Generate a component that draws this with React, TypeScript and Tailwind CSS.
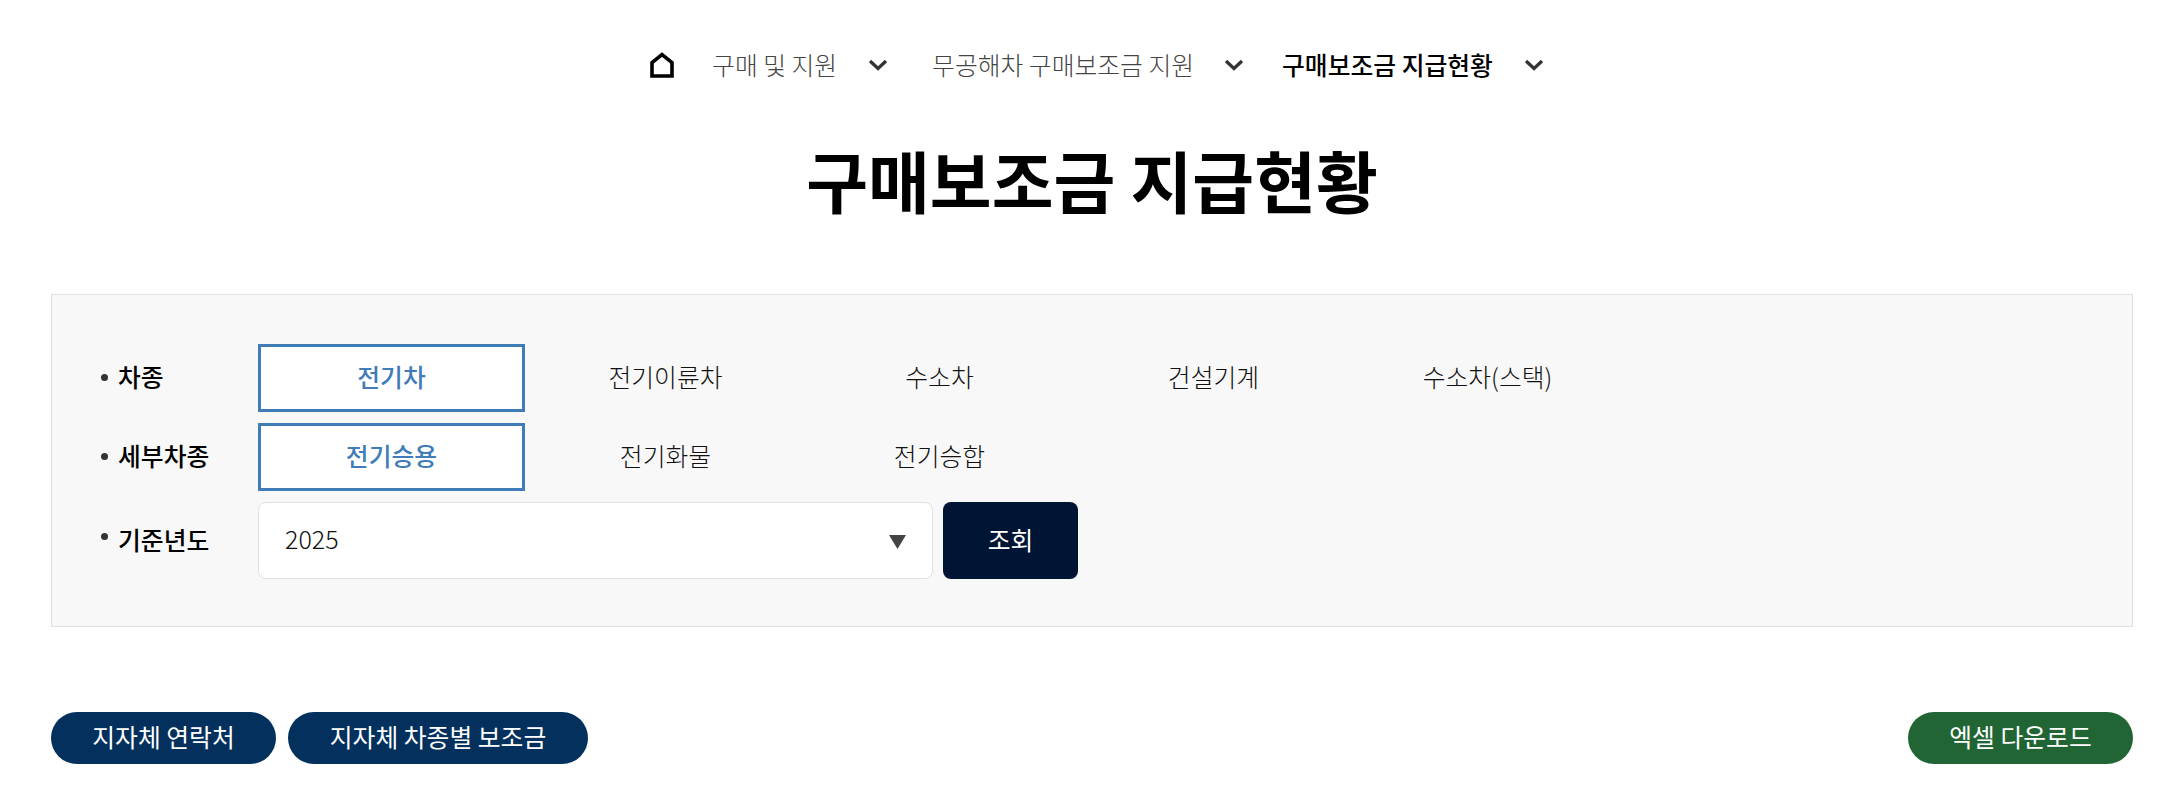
import { useState } from "react";

const crumbs = [
  { label: "구매 및 지원", cls: "ml-[38px] font-light text-[#444]", gap: "ml-[31px]" },
  { label: "무공해차 구매보조금 지원", cls: "ml-[44px] font-light text-[#444]", gap: "ml-[30px]" },
  { label: "구매보조금 지급현황", cls: "ml-[38px] font-medium text-black", gap: "ml-[31px]" },
];

const vehicleTypes = ["전기차", "전기이륜차", "수소차", "건설기계", "수소차(스택)"];
const subTypes = ["전기승용", "전기화물", "전기승합"];

function HomeIcon() {
  return (
    <svg width="24" height="26" viewBox="0 0 24 26" fill="none" stroke="#000" strokeWidth="3.6">
      <path d="M2 24V10.5L12 2.5l10 8V24z" />
    </svg>
  );
}

function Chevron() {
  return (
    <svg width="20" height="12" viewBox="0 0 20 12" fill="none" stroke="#333" strokeWidth="3.2">
      <path d="M2 2l8 7.5L18 2" />
    </svg>
  );
}

function Tabs({ items, value, onPick }: { items: string[]; value: string; onPick: (v: string) => void }) {
  return (
    <div className="flex gap-[7px]">
      {items.map((t) => (
        <button
          key={t}
          onClick={() => onPick(t)}
          className={
            t === value
              ? "h-[68px] w-[267px] border-[3px] border-[#3f7cb8] bg-white pb-[2px] font-medium text-[#3f7cb8]"
              : "h-[68px] w-[267px] pb-[2px] font-light text-[#111]"
          }
        >
          {t}
        </button>
      ))}
    </div>
  );
}

function Label({ text, dot = "" }: { text: string; dot?: string }) {
  return (
    <div className="flex w-[206px] items-center pb-[2px] font-medium text-black">
      <span className={`ml-[49px] mr-[10px] h-[7px] w-[7px] rounded-full bg-[#333] ${dot}`} />
      {text}
    </div>
  );
}

export default function App() {
  const [kind, setKind] = useState("전기차");
  const [sub, setSub] = useState("전기승용");

  return (
    <div className="min-h-screen bg-white font-['Noto_Sans_CJK_KR','Noto_Sans',sans-serif] text-[24.8px]">
      <nav className="flex h-[130px] items-center justify-center pl-[10px]">
        <HomeIcon />
        {crumbs.map((c) => (
          <div key={c.label} className="flex items-center">
            <span className={c.cls}>{c.label}</span>
            <span className={c.gap}>
              <Chevron />
            </span>
          </div>
        ))}
      </nav>

      <h1 className="text-center text-[67.2px] leading-[98px] font-bold text-black">구매보조금 지급현황</h1>

      <section className="mx-[51px] mt-[66px] flex h-[333px] flex-col gap-[11px] border border-[#e1e1e1] bg-[#f8f8f8] pt-[49px]">
        <div className="flex items-center">
          <Label text="차종" />
          <Tabs items={vehicleTypes} value={kind} onPick={setKind} />
        </div>
        <div className="flex items-center">
          <Label text="세부차종" />
          <Tabs items={subTypes} value={sub} onPick={setSub} />
        </div>
        <div className="flex items-center">
          <Label text="기준년도" dot="-mt-[6px]" />
          <div className="relative">
            <select className="h-[77px] w-[675px] appearance-none rounded-[8px] border border-[#e1e1e1] bg-white pb-[3px] pl-[26px] text-[25px] font-light text-[#111]">
              <option>2025</option>
              <option>2024</option>
            </select>
            <svg className="absolute top-[33px] right-[27px]" width="17" height="14" viewBox="0 0 17 14" fill="#444">
              <path d="M0 0h17L8.5 14z" />
            </svg>
          </div>
          <button className="ml-[10px] h-[77px] w-[135px] rounded-[8px] bg-[#001433] pb-[2px] text-white">조회</button>
        </div>
      </section>

      <div className="mx-[51px] mt-[85px] flex items-center gap-[12px]">
        <button className="h-[52px] w-[225px] rounded-full bg-[#03305c] pb-[2px] text-white">지자체 연락처</button>
        <button className="h-[52px] w-[300px] rounded-full bg-[#03305c] pb-[2px] text-white">지자체 차종별 보조금</button>
        <button className="ml-auto h-[52px] w-[225px] rounded-full bg-[#226535] pb-[2px] text-white">엑셀 다운로드</button>
      </div>
    </div>
  );
}
